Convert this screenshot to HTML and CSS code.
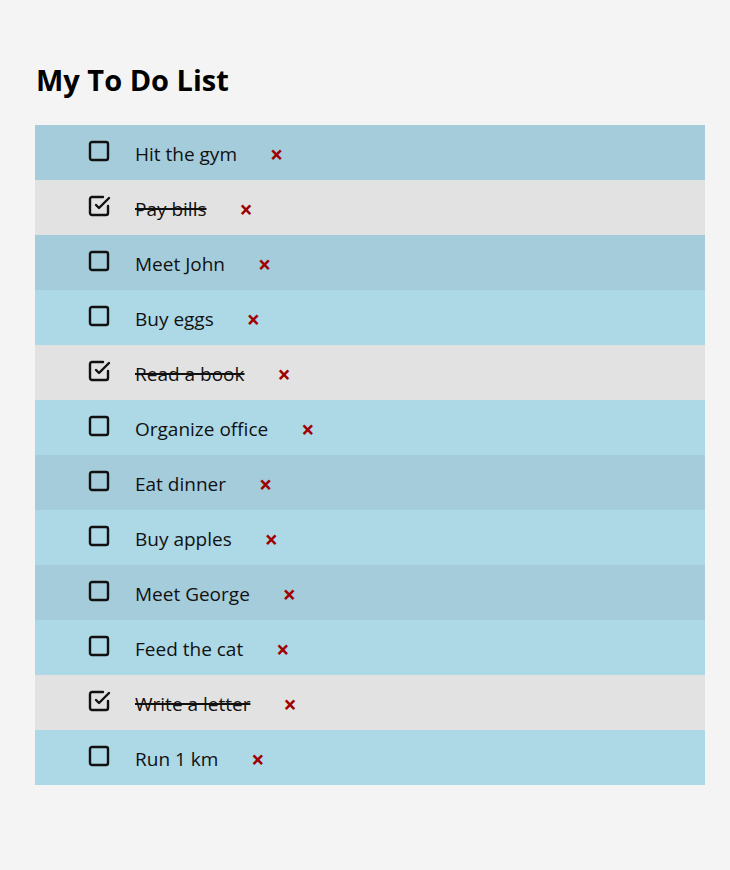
FILE: index.html
```html
<!DOCTYPE html>
<html lang="en">
<head>
<meta charset="utf-8">
<title>My To Do List</title>
<link rel="stylesheet" href="styles.css">
</head>
<body>
<main class="app">
  <h1 class="title">My To Do List</h1>
  <ul class="list">
    <li class="item"><svg class="box" viewBox="0 0 24 24"><rect x="3" y="3" width="18" height="18" rx="2"/></svg><span class="text">Hit the gym</span><span class="del">×</span></li>
    <li class="item done"><svg class="box" viewBox="0 0 24 24"><polyline points="9 11 12 14 22 4"/><path d="M21 12v7a2 2 0 0 1-2 2H5a2 2 0 0 1-2-2V5a2 2 0 0 1 2-2h11"/></svg><span class="text">Pay bills</span><span class="del">×</span></li>
    <li class="item"><svg class="box" viewBox="0 0 24 24"><rect x="3" y="3" width="18" height="18" rx="2"/></svg><span class="text">Meet John</span><span class="del">×</span></li>
    <li class="item"><svg class="box" viewBox="0 0 24 24"><rect x="3" y="3" width="18" height="18" rx="2"/></svg><span class="text">Buy eggs</span><span class="del">×</span></li>
    <li class="item done"><svg class="box" viewBox="0 0 24 24"><polyline points="9 11 12 14 22 4"/><path d="M21 12v7a2 2 0 0 1-2 2H5a2 2 0 0 1-2-2V5a2 2 0 0 1 2-2h11"/></svg><span class="text">Read a book</span><span class="del">×</span></li>
    <li class="item"><svg class="box" viewBox="0 0 24 24"><rect x="3" y="3" width="18" height="18" rx="2"/></svg><span class="text">Organize office</span><span class="del">×</span></li>
    <li class="item"><svg class="box" viewBox="0 0 24 24"><rect x="3" y="3" width="18" height="18" rx="2"/></svg><span class="text">Eat dinner</span><span class="del">×</span></li>
    <li class="item"><svg class="box" viewBox="0 0 24 24"><rect x="3" y="3" width="18" height="18" rx="2"/></svg><span class="text">Buy apples</span><span class="del">×</span></li>
    <li class="item"><svg class="box" viewBox="0 0 24 24"><rect x="3" y="3" width="18" height="18" rx="2"/></svg><span class="text">Meet George</span><span class="del">×</span></li>
    <li class="item"><svg class="box" viewBox="0 0 24 24"><rect x="3" y="3" width="18" height="18" rx="2"/></svg><span class="text">Feed the cat</span><span class="del">×</span></li>
    <li class="item done"><svg class="box" viewBox="0 0 24 24"><polyline points="9 11 12 14 22 4"/><path d="M21 12v7a2 2 0 0 1-2 2H5a2 2 0 0 1-2-2V5a2 2 0 0 1 2-2h11"/></svg><span class="text">Write a letter</span><span class="del">×</span></li>
    <li class="item"><svg class="box" viewBox="0 0 24 24"><rect x="3" y="3" width="18" height="18" rx="2"/></svg><span class="text">Run 1 km</span><span class="del">×</span></li>
  </ul>
</main>
</body>
</html>
```
FILE: styles.css
```css
html, body {
  margin: 0;
  padding: 0;
  background: #f4f4f4;
}
body {
  font-family: "Open Sans", "Noto Sans", sans-serif;
  color: #111;
}
.app {
  padding: 58px 25px 0 35px;
}
.title {
  margin: 0 0 23px 1px;
  font-size: 29px;
  font-weight: 700;
  line-height: 44px;
  color: #000;
}
.list {
  list-style: none;
  margin: 0;
  padding: 0;
}
.item {
  box-sizing: border-box;
  height: 55px;
  display: flex;
  align-items: center;
  padding: 2px 0 0 52px;
  background: #add8e6;
}
.item:nth-child(odd) {
  background: #a5ccdb;
}
.item.done {
  background: #e2e2e2;
}
.box {
  width: 24px;
  height: 24px;
  fill: none;
  stroke: #111;
  stroke-width: 2.4;
  stroke-linecap: round;
  stroke-linejoin: round;
  margin-top: -6px;
}
.text {
  margin-left: 24px;
  font-size: 19px;
  line-height: 24px;
}
.done .text {
  text-decoration: line-through;
  text-decoration-thickness: 2px;
}
.del {
  margin-left: 33px;
  color: #a00000;
  font-size: 23px;
  font-weight: 700;
  line-height: 24px;
}
```
